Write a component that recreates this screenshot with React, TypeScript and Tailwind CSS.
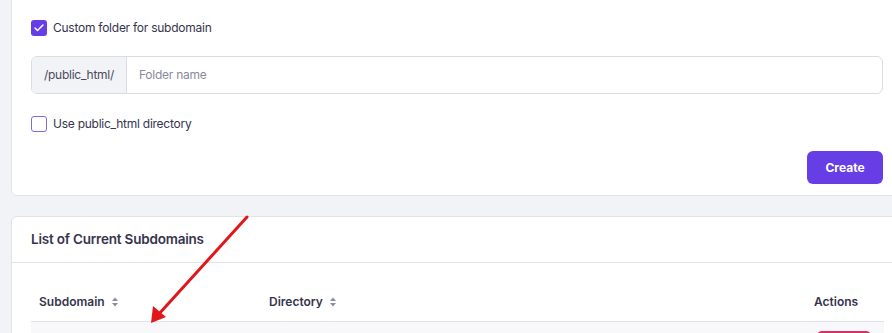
import { Check } from "lucide-react";

function SortIcon() {
  return (
    <svg width="8" height="10" viewBox="0 0 8 10" className="ml-[6px] text-[#8c8ba0]">
      <path d="M4 0.5 L7 4 H1 Z" fill="currentColor" />
      <path d="M4 9.5 L7 6 H1 Z" fill="currentColor" />
    </svg>
  );
}

export default function App() {
  return (
    <div
      className="relative h-[333px] w-[892px] overflow-hidden bg-[#f2f3f6] pl-[11px] text-[#36344d]"
      style={{ fontFamily: "Inter, 'Open Sans', sans-serif" }}
    >
      {/* Create subdomain card */}
      <section className="-mt-[10px] w-[892px] rounded-b-[6px] border border-[#e2e3e8] bg-white px-[19px] pt-[29px] pb-[11px]">
        <label className="flex h-[16px] items-center gap-[6px]">
          <span className="flex h-[16px] w-[16px] items-center justify-center rounded-[3px] bg-[#673de6]">
            <Check className="h-[12px] w-[12px] text-white" strokeWidth={3} />
          </span>
          <span className="text-[12px] tracking-[-0.25px]">Custom folder for subdomain</span>
        </label>

        <div className="mt-[20px] flex h-[38px] overflow-hidden rounded-[6px] border border-[#dadce0]">
          <div className="flex w-[95px] items-center justify-center border-r border-[#dadce0] bg-[#f2f3f6] text-[12px] tracking-[-0.25px] text-[#4a4960]">
            /public_html/
          </div>
          <div className="flex flex-1 items-center pl-[12px] text-[12px] tracking-[-0.25px] text-[#8a899b]">Folder name</div>
        </div>

        <label className="mt-[22px] flex h-[16px] items-center gap-[6px]">
          <span className="h-[16px] w-[16px] rounded-[3px] border-[1.5px] border-[#7a6fd6] bg-white" />
          <span className="text-[12px] tracking-[-0.25px]">Use public_html directory</span>
        </label>

        <div className="mt-[19px] flex justify-end">
          <button className="h-[33px] w-[76px] rounded-[6px] bg-[#673de6] text-[12px] font-bold text-white">
            Create
          </button>
        </div>
      </section>

      {/* Subdomain list card */}
      <section className="mt-[20px] w-[892px] rounded-t-[6px] border border-[#e2e3e8] bg-white">
        <div className="flex h-[46px] items-center border-b border-[#e2e3e8] px-[19px]">
          <h2 className="text-[13.5px] font-semibold tracking-[-0.2px]">List of Current Subdomains</h2>
        </div>
        <div className="px-[19px] pt-[19px]">
          <div className="flex h-[40px] w-[853px] items-center border-b border-[#e2e3e8] text-[12px] font-semibold">
            <div className="flex w-[238px] items-center pl-[8px]">
              Subdomain
              <SortIcon />
            </div>
            <div className="flex flex-1 items-center">
              Directory
              <SortIcon />
            </div>
            <div className="w-[70px] pr-[27px] text-right">Actions</div>
          </div>
          <div className="flex h-[40px] w-[853px] justify-end bg-[#f8f8fb] pr-[13px] pt-[9px]">
            <div className="h-[24px] w-[54px] rounded-[5px] bg-[#d63163]" />
          </div>
        </div>
      </section>

      {/* red annotation arrow */}
      <svg className="pointer-events-none absolute left-0 top-0" width="892" height="333">
        <line x1="247" y1="217" x2="158" y2="315" stroke="#e0181b" strokeWidth="3" strokeLinecap="round" />
        <path d="M151 323 L153 306 L166 317 Z" fill="#e0181b" />
      </svg>
    </div>
  );
}
